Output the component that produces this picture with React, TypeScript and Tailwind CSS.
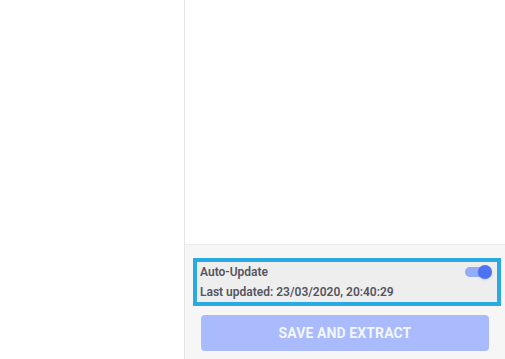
import React, { useState } from 'react';

const App: React.FC = () => {
  const [autoUpdate, setAutoUpdate] = useState(true);

  return (
    <div className="flex h-screen w-full bg-white font-['Roboto',sans-serif]">
      {/* Sidebar */}
      <div className="w-[185px] shrink-0 border-r border-[#e4e4e4] bg-white" />

      {/* Main panel */}
      <div className="flex flex-1 flex-col">
        <div className="flex-1 bg-white" />

        {/* Footer */}
        <div className="border-t border-[#ececec] bg-[#f6f6f6] pt-[13px] pb-[8px]">
          <div className="ml-[8px] mr-[4px] border-4 border-[#2aaae3] bg-[#eeeeee] pl-[3px] pr-[4px]">
            <div className="flex h-[20px] items-center justify-between">
              <span className="text-[12px] font-semibold leading-[20px] text-[#55555f]">Auto-Update</span>
              <button
                onClick={() => setAutoUpdate(!autoUpdate)}
                className="relative mr-[1px] h-[20px] w-[27px]"
              >
                <span className={`absolute left-0 top-[5px] h-[10px] w-[24px] rounded-full ${autoUpdate ? 'bg-[#94abf5]' : 'bg-[#c4c4c4]'}`} />
                <span className={`absolute top-[2.5px] h-[14px] w-[14px] rounded-full shadow-sm ${autoUpdate ? 'right-0 bg-[#4a74f1]' : 'left-0 bg-white'}`} />
              </button>
            </div>
            <div className="text-[12px] font-semibold leading-[20px] text-[#55555f]">
              Last updated: 23/03/2020, 20:40:29
            </div>
          </div>

          <div className="mx-[16px] mt-[9px]">
            <button className="h-[36px] w-full rounded-[4px] bg-[#a9bbfd] text-[14px] font-bold tracking-[0.1px] text-[#f3f6ff]">
              SAVE AND EXTRACT
            </button>
          </div>
        </div>
      </div>
    </div>
  );
};

export default App;
